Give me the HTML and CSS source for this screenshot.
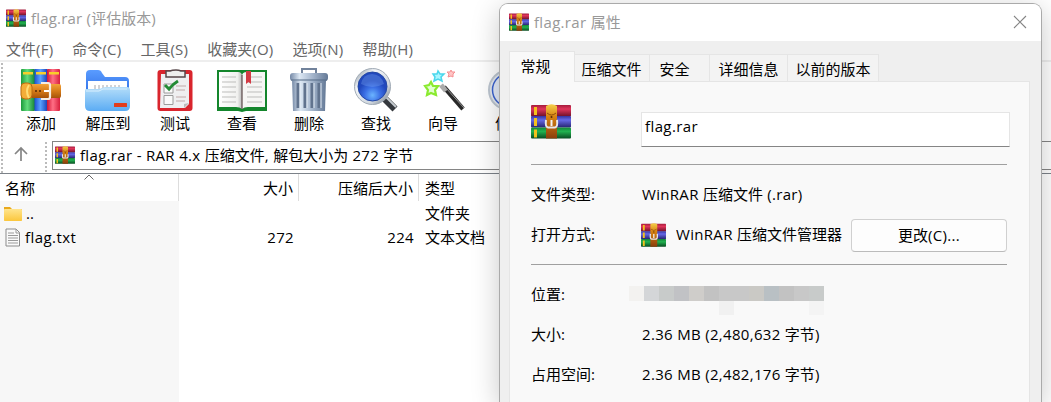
FILE: index.html
```html
<!DOCTYPE html>
<html lang="zh-CN">
<head>
<meta charset="utf-8">
<title>flag.rar</title>
<link rel="stylesheet" href="styles.css">
</head>
<body>
<svg class="defs" width="0" height="0" aria-hidden="true">
  <defs>
    <linearGradient id="red" x2="0" y2="1"><stop stop-color="#a51c3c"/><stop offset=".35" stop-color="#e0355b"/><stop offset="1" stop-color="#6d1028"/></linearGradient>
    <linearGradient id="blue" x2="0" y2="1"><stop stop-color="#3434a0"/><stop offset=".35" stop-color="#6668e6"/><stop offset="1" stop-color="#26246f"/></linearGradient>
    <linearGradient id="green" x2="0" y2="1"><stop stop-color="#138438"/><stop offset=".35" stop-color="#22b350"/><stop offset="1" stop-color="#0a4c22"/></linearGradient>
    <linearGradient id="strap" x2="0" y2="1"><stop stop-color="#f5d04a"/><stop offset=".35" stop-color="#d98412"/><stop offset="1" stop-color="#8a3e0c"/></linearGradient>
    <linearGradient id="gv"><stop stop-color="#1b9a3b"/><stop offset=".45" stop-color="#62dc7c"/><stop offset="1" stop-color="#168334"/></linearGradient>
    <linearGradient id="bv"><stop stop-color="#1e4fd0"/><stop offset=".45" stop-color="#5aa2ff"/><stop offset="1" stop-color="#1a3fb4"/></linearGradient>
    <linearGradient id="rv"><stop stop-color="#d11536"/><stop offset=".45" stop-color="#ff6f85"/><stop offset="1" stop-color="#d81f3d"/></linearGradient>
    <linearGradient id="belt" x2="0" y2="1"><stop stop-color="#f2a33a"/><stop offset=".5" stop-color="#d67b18"/><stop offset="1" stop-color="#a65308"/></linearGradient>
    <linearGradient id="fold" x2="0" y2="1"><stop stop-color="#b5def9"/><stop offset="1" stop-color="#5bacf4"/></linearGradient>
    <linearGradient id="foldback" x2="0" y2="1"><stop stop-color="#5a9cff"/><stop offset="1" stop-color="#2f6fe6"/></linearGradient>
    <linearGradient id="steel"><stop stop-color="#7589a6"/><stop offset=".25" stop-color="#dce7f3"/><stop offset=".6" stop-color="#a3b4cb"/><stop offset="1" stop-color="#647996"/></linearGradient>
    <linearGradient id="page"><stop stop-color="#fff"/><stop offset=".8" stop-color="#f1f1ef"/><stop offset="1" stop-color="#bbb"/></linearGradient>
    <linearGradient id="rim" x2="1" y2="1"><stop stop-color="#7b8894"/><stop offset=".3" stop-color="#f2f5f8"/><stop offset=".7" stop-color="#d0d7de"/><stop offset="1" stop-color="#66727f"/></linearGradient>
    <radialGradient id="lens" cy=".8"><stop stop-color="#6bb4ff"/><stop offset=".55" stop-color="#3a6ee4"/><stop offset="1" stop-color="#2148bd"/></radialGradient>
    <linearGradient id="yellow" x2="0" y2="1"><stop stop-color="#ffe48d"/><stop offset="1" stop-color="#fbc63c"/></linearGradient>
    <symbol id="rar" viewBox="0 0 40 35" preserveAspectRatio="none">
      <rect y="1" width="40" height="11.5" rx="1" fill="url(#red)"/>
      <rect y="12" width="40" height="11.5" rx="1" fill="url(#blue)"/>
      <rect y="23.5" width="40" height="11" rx="1" fill="url(#green)"/>
      <path d="M3 3h3v8H3zM3 14h3v8H3zM3 25.500h3v8H3z" fill="#f4c11c"/>
      <path d="M15 2q5.500-3.500 11 0v32.500H15z" fill="url(#strap)"/>
      <path d="M16 9q4.500 4 9 0" fill="none" stroke="#8e4d09"/>
      <path d="M15 16q-1 7 2 7.500h7q3-.5 2-7.500" fill="none" stroke="#e8e8ec" stroke-width="2"/>
      <path d="M20.500 16v6" stroke="#f4f4f4" stroke-width="2"/>
      <circle cx="20.500" cy="13" r="1" fill="#562a08"/>
    </symbol>
  </defs>
</svg>

<main class="window">
  <header class="titlebar"><svg class="app-icon"><use href="#rar"/></svg><span><span class="en">flag.rar (</span>评估版本<span class="en">)</span></span></header>
  <nav class="menu">
    <span>文件<span class="en">(F)</span></span><span>命令<span class="en">(C)</span></span><span>工具<span class="en">(S)</span></span><span>收藏夹<span class="en">(O)</span></span><span>选项<span class="en">(N)</span></span><span>帮助<span class="en">(H)</span></span>
  </nav>
  <section class="toolbar">
    <div class="tool"><svg viewBox="0 0 48 44">
      <rect x="4" y="1" width="14" height="42" rx="1" fill="url(#gv)"/><rect x="17.500" y="1" width="13" height="42" fill="url(#bv)"/><rect x="30" y="1" width="13" height="42" rx="1" fill="url(#rv)"/>
      <path d="M6 4h10v2.500H6zM19 4h10v2.500H19zM32 4h10v2.500H32z" fill="#f8ce2a"/>
      <rect x="12" y="16" width="32" height="14" rx="2" fill="url(#belt)"/>
      <rect x="4" y="15" width="11" height="16" rx="4" fill="#f3ad38" stroke="#b76b11"/>
      <path d="M12 17q-4 6 0 13" fill="none" stroke="#ffdd75" stroke-width="2"/>
      <path d="M24 15h7q2 0 2 2v12q0 2-2 2h-7" fill="none" stroke="#f5eee5" stroke-width="2.200"/>
      <path d="M27 23h5" stroke="#fff" stroke-width="2"/><circle cx="19" cy="23" r="1" fill="#532806"/><circle cx="23" cy="23" r="1" fill="#532806"/>
    </svg><span>添加</span></div>
    <div class="tool"><svg viewBox="0 0 48 44">
      <path d="M2 25V6q0-4 4-4h8q3 0 4 3l3 4h20q4 0 4 4v13z" fill="url(#foldback)"/>
      <path d="M4 13h39v14H4z" fill="#fff"/><path d="M11 17v6M15 17v6M19 17v6M23 17v6M27 17v6M31 17v6M35 17v6" stroke="#a6a6aa"/>
      <path d="M2 21h12q2 0 4-1 2-1 4-1h21q3 0 3 3v16q0 5-5 5H6q-5 0-5-5V23q0-2 1-2" fill="url(#fold)"/>
      <path d="M2 23h13l4-2h24" fill="none" stroke="#d8effe"/><rect x="30" y="35" width="13" height="4" rx=".5" fill="#e33d1d"/>
    </svg><span>解压到</span></div>
    <div class="tool"><svg viewBox="0 0 48 44">
      <rect x="6.500" y="2" width="35" height="41" rx="3" fill="#d9252d"/><path d="M10 6h28v30l-4 4H9z" fill="#efeff1"/><path d="M38 35l-5 5v-4z" fill="#bbb"/>
      <path d="M15 3h4q2-1 6-1 3 0 5 1h4v6H15z" fill="#eee" stroke="#57474a" stroke-width="1.500"/>
      <path d="M13 16h9v9h-9zM13 27.500h9v9h-9z" fill="#fafafa" stroke="#9b9b9b"/><path d="M14 17l4 4q4-5 9-8" fill="none" stroke="#248b35" stroke-width="3"/>
      <path d="M25 18h10M25 22h9M25 29h10M25 33h9" stroke="#c0a9a9"/>
    </svg><span>测试</span></div>
    <div class="tool"><svg class="book" viewBox="0 0 52 44">
      <path d="M1 2h50v41H30l-4 1-4-1H1z" fill="#14862c"/><path d="M3 4h19q4 0 4 4v33q-2-2-6-2H3z" fill="url(#page)"/><path d="M49 4H31q-5 0-5 4v33q2-2 6-2h17z" fill="#f6f6f4"/>
      <path d="M6 9h14M6 14h14M6 19h14M6 24h14M6 29h14M6 34h14M31 9h15M31 14h15M31 19h15M31 24h15M31 29h15M31 34h15" stroke="#bdbdbb"/>
      <path d="M30 3h5v13l-2.500-2-2.500 2z" fill="#d33a43"/><path d="M26 7v34" stroke="#655" stroke-width="1.300"/>
    </svg><span>查看</span></div>
    <div class="tool"><svg viewBox="0 0 48 44">
      <path d="M17 5V1h14v4" fill="none" stroke="#71829b" stroke-width="2"/><path d="M7 11h34l-1 32H8z" fill="url(#steel)"/>
      <path d="M13 15v25M20 15v25M27 15v25M34 15v25" stroke="#61738e" stroke-width="3"/><path d="M15 15v25M22 15v25M29 15v25M36 15v25" stroke="#e3ebf4"/>
      <rect x="5" y="5" width="38" height="8" rx="3" fill="url(#steel)"/><path d="M6 12h36" stroke="#556a86"/>
    </svg><span>删除</span></div>
    <div class="tool"><svg viewBox="0 0 48 44">
      <path d="M32 30l11 11" stroke="#34383d" stroke-width="7"/><path d="M33 28l11 11" stroke="#c5cbd0" stroke-width="2"/>
      <circle cx="20.500" cy="18.500" r="18" fill="url(#rim)" stroke="#a1abb6"/><circle cx="20.500" cy="18.500" r="14.500" fill="url(#lens)" stroke="#2448a4"/><path d="M9 16q11 6 23 0Q29 6 20 6T9 16" fill="#8ebaff" opacity=".28"/>
    </svg><span>查找</span></div>
    <div class="tool"><svg viewBox="0 0 48 44">
      <path d="M25 19l19 22" stroke="#292929" stroke-width="4.500"/><path d="M22 17l5 6" stroke="#aaa" stroke-width="5"/><path d="M27 20l18 20" stroke="#949494"/>
      <path d="M12 14l2 4 5 0-3 4 1 5-5-2-4 2 1-5-3-4 4-1z" fill="#e0ffd0" stroke="#8bea30" stroke-width="2.200"/>
      <path d="M19 3l2 3 4 0-3 3 1 4-4-2-4 2 1-4-2-3 4 0z" fill="#a8f6ff" stroke="#4bd7ec" stroke-width="1.500"/>
      <path d="M32 2l1 2h3l-2 2v3l-2-1-3 1 1-3-2-2h3z" fill="#ffc6c6" stroke="#f58e91"/>
    </svg><span>向导</span></div>
    <div class="tool"><svg viewBox="0 0 48 44"><circle cx="23" cy="22" r="20" fill="#e4e8ee" stroke="#bdc6d0" stroke-width="2"/><circle cx="23" cy="22" r="16.500" fill="#e4ebf8" stroke="#3c63cf" stroke-width="1.500"/></svg><span>信息</span></div>
  </section>
  <section class="address-row">
    <div class="up"><svg width="16" height="16" viewBox="0 0 16 16"><path d="M8 15V2M2 8l6-6 6 6" fill="none" stroke="#858585" stroke-width="1.700"/></svg></div>
    <div class="address"><svg class="app-icon"><use href="#rar"/></svg><span><span class="en">flag.rar - RAR 4.x </span>压缩文件<span class="en">, </span>解包大小为<span class="en"> 272 </span>字节</span></div>
  </section>
  <section class="files">
    <div class="row head"><span>名称<svg class="sort" width="10" height="6" viewBox="0 0 10 6"><path d="M.5 5.500L5 1l4.500 4.500" fill="none" stroke="#666"/></svg></span><span>大小</span><span>压缩后大小</span><span>类型</span></div>
    <div class="row"><span><svg width="19" height="15" viewBox="0 0 19 15"><path d="M0 1h6l2 2h10v4H0z" fill="#e9a91c"/><rect y="3" width="18" height="12" rx=".7" fill="url(#yellow)"/></svg><span class="dots">..</span></span><span></span><span></span><span>文件夹</span></div>
    <div class="row"><span><svg class="doc" width="16" height="19" viewBox="0 0 16 19"><path d="M1 1h10l3.500 3.500V18H1z" fill="#fafafa" stroke="#8b8b8b"/><path d="M11 1v4h4M3 5h6M3 7.500h10M3 10h10M3 12.500h10M3 15h10" fill="none" stroke="#9a9a9a"/></svg><span class="en file-name">flag.txt</span></span><span class="en">272</span><span class="en">224</span><span>文本文档</span></div>
    <div class="blank"></div>
  </section>
</main>

<aside class="dialog">
  <header class="dialog-title"><svg class="app-icon"><use href="#rar"/></svg><span><span class="en">flag.rar </span>属性</span><svg class="close" width="14" height="14" viewBox="0 0 14 14"><path d="M1 1l12 12M13 1L1 13" stroke="#858585" stroke-width="1.100"/></svg></header>
  <div class="tabs"><span class="active">常规</span><span class="t2">压缩文件</span><span class="t3">安全</span><span class="t4">详细信息</span><span class="t5">以前的版本</span></div>
  <div class="panel">
    <div class="name"><svg class="big-icon"><use href="#rar"/></svg><div class="input en">flag.rar</div></div>
    <div class="property type"><span>文件类型<span class="en">:</span></span><span><span class="en">WinRAR </span>压缩文件<span class="en"> (.rar)</span></span></div>
    <div class="property open"><span>打开方式<span class="en">:</span></span><div class="program"><svg class="program-icon"><use href="#rar"/></svg><span class="program-name"><span class="en">WinRAR </span>压缩文件管理器</span></div><div class="button">更改<span class="en">(C)...</span></div></div>
    <div class="property location"><span>位置<span class="en">:</span></span><div class="mosaic"><i class="a"></i><i class="b"></i><i class="c"></i><i class="d"></i><i class="e"></i><i class="f"></i><i class="g"></i><i class="g"></i><i class="h"></i><i class="j"></i><i class="f"></i><i class="g"></i><i class="c"></i><i class="k"></i><i class="l"></i></div></div>
    <div class="property"><span>大小<span class="en">:</span></span><span><span class="en">2.36 MB (2,480,632 </span>字节<span class="en">)</span></span></div>
    <div class="property"><span>占用空间<span class="en">:</span></span><span><span class="en">2.36 MB (2,482,176 </span>字节<span class="en">)</span></span></div>
  </div>
</aside>
</body>
</html>
```
FILE: styles.css
```css
* { box-sizing: border-box; }
body { margin: 0; width: 1051px; height: 402px; overflow: hidden; position: relative; background: #fff; color: #000; font: 15px/20px "Open Sans", "Noto Sans CJK SC", sans-serif; }
svg { display: block; flex: none; }
.defs { position: absolute; }
.en { letter-spacing: .32px; white-space: pre; }
.window { height: 402px; display: flex; flex-direction: column; white-space: nowrap; }
.app-icon { width: 20px; height: 18px; }
.titlebar { height: 37px; display: flex; align-items: center; gap: 5px; padding: 0 0 2px 6px; color: #999; }
.titlebar .en { letter-spacing: .2px; }
.menu .en { letter-spacing: .25px; }
.menu { height: 25px; display: flex; gap: 19px; padding: 2px 0 0 6px; color: #666; border-bottom: 2px solid #eee; }
.toolbar { height: 76px; display: flex; padding: 5px 0 0 7.5px; background: radial-gradient(circle, #bbb 1px, transparent 1.200px) 0 0 / 4px 4px repeat-y; }
.tool { width: 67px; flex: none; display: flex; flex-direction: column; align-items: center; gap: 1px; }
.tool svg { width: 48px; height: 44px; margin-top: 1px; }
.tool .book { width: 52px; }
.address-row { height: 36px; display: flex; padding-top: 3px; border-bottom: 1px solid #7c8289; background: radial-gradient(circle, #bbb 1px, transparent 1.200px) 0 0 / 4px 4px repeat-y; }
.up { width: 52px; padding: 5px 0 0 13px; background: radial-gradient(circle, #bbb 1px, transparent 1.200px) 44px 0 / 4px 4px repeat-y; }
.address { flex: 1; height: 29px; border: 1px solid #858585; border-right: 0; display: flex; align-items: center; gap: 5px; padding: 0 0 1px 2px; }
.files { flex: 1; display: flex; flex-direction: column; }
.row { height: 24px; display: grid; grid-template-columns: 179px 120px 120px 1fr; align-items: center; }
.row > span { height: 100%; display: flex; align-items: center; }
.row > span:first-child { background: #f7f7f7; padding-left: 4px; gap: 3px; }
.row > span:nth-child(2), .row > span:nth-child(3) { justify-content: flex-end; padding-right: 5px; }
.row > span:last-child { padding-left: 6px; }
.head { height: 27px; }
.head > span:first-child { background: #fff; padding-left: 5px; }
.head > span:not(:last-child) { border-right: 1px solid #ddd; }
.sort { margin: -21px 0 0 46px; }
.doc { margin-left: 1px; }
.file-name { padding-left: 1px; letter-spacing: .45px; }
.blank { flex: 1; width: 179px; background: #f7f7f7; }

.dialog { position: absolute; left: 499px; top: 3px; width: 543px; height: 399px; border: 1px solid #aaa; border-bottom: 0; border-radius: 9px 9px 0 0; background: #efefef; box-shadow: 0 6px 28px rgba(0,0,0,.22); display: flex; flex-direction: column; white-space: nowrap; }
.dialog-title { height: 37px; display: flex; align-items: center; gap: 5px; padding: 0 14px 1px 9px; border-radius: 8px 8px 0 0; background: #fff; color: #999; }
.close { margin-left: auto; }
.tabs { height: 41px; display: flex; align-items: flex-end; padding-left: 9px; }
.tabs span { height: 28px; border: 1px solid #e5e5e5; border-left: 0; padding-top: 4px; background: #f3f3f3; text-align: center; }
.tabs .active { width: 66px; height: 31px; background: #f9f9f9; border: 1px solid #e5e5e5; border-bottom: 0; padding: 4px 13px 0 0; }
.tabs .t2 { width: 75px; padding-right: 1px; }
.tabs .t3 { width: 60px; padding-right: 10px; }
.tabs .t4 { width: 78px; }
.tabs .t5 { width: 91px; }
.tabs::after { content: ""; flex: 1; height: 1px; margin-right: 11px; background: #e5e5e5; }
.panel { width: 521px; flex: 1; margin-left: 9px; padding-left: 21px; background: #f9f9f9; border: 1px solid #e5e5e5; border-top: 0; border-bottom: 0; }
.name { width: 476px; height: 83px; border-bottom: 1px solid #a0a0a0; display: flex; padding-top: 30px; }
.big-icon { width: 40px; height: 35px; margin: -8px 70px 0 0; }
.input { width: 369px; flex: none; height: 35px; padding: 3px 3px; border: 1px solid #e5e5e5; border-bottom-color: #858585; background: #fff; letter-spacing: .4px; }
.property { width: 476px; height: 40px; display: grid; grid-template-columns: 111px 1fr; align-items: center; }
.type { height: 40px; margin-top: 9px; }
.open { height: 51px; grid-template-columns: 110px 210px 156px; border-bottom: 1px solid #a0a0a0; padding-bottom: 10px; }
.program { display: flex; align-items: center; gap: 10px; overflow: hidden; width: 201px; margin-top: 1px; }
.program-icon { width: 25px; height: 24px; }
.program-name { overflow: hidden; margin-top: -2px; }
.button { height: 33px; margin-top: 2px; border: 1px solid #d0d0d0; border-bottom-color: #bbb; border-radius: 4px; background: #fdfdfd; text-align: center; padding-top: 5px; }
.location { margin-top: 9px; }
.location > span { margin-top: -2px; }
.mosaic { width: 195px; height: 29px; display: grid; grid-template-columns: repeat(13, 15px); grid-template-rows: 15px 14px; margin: 12px 0 0 -13px; }
.a { background: #f3f2f0; }
.b { background: #d4d6d8; }
.c { background: #c8cbca; }
.d { background: #c1c2c5; }
.e { background: #cfcdca; }
.f { background: #c2c2c2; }
.g { background: #c8c8c8; }
.h { background: #cac9c5; }
.j { background: #b9c0c4; }
.k { grid-column: 7; background: #f1f1f1; }
.l { grid-column: 13; background: #f4f4f4; }
```
